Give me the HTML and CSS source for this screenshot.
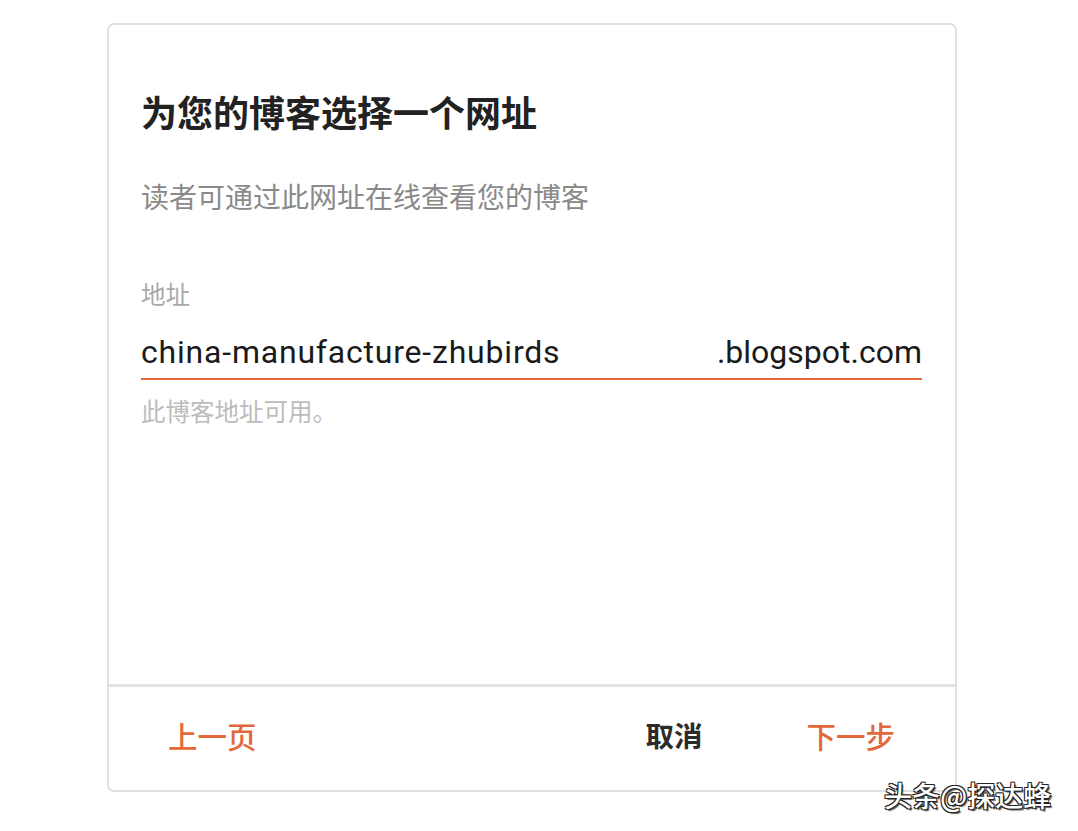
FILE: index.html
```html
<!DOCTYPE html>
<html lang="zh-CN">
<head>
<meta charset="utf-8">
<title>为您的博客选择一个网址</title>
<link rel="stylesheet" href="styles.css">
</head>
<body>
<div class="page">
  <div class="card">
    <div class="card-body">
      <h1 class="title">为您的博客选择一个网址</h1>
      <p class="subtitle">读者可通过此网址在线查看您的博客</p>
      <div class="field">
        <div class="field-label">地址</div>
        <div class="field-input">
          <span class="field-value">china-manufacture-zhubirds</span>
          <span class="field-suffix">.blogspot.com</span>
        </div>
        <div class="field-help">此博客地址可用。</div>
      </div>
    </div>
    <div class="card-footer">
      <span class="btn btn-accent">上一页</span>
      <span class="spacer"></span>
      <span class="btn btn-cancel">取消</span>
      <span class="btn btn-accent btn-next">下一步</span>
    </div>
  </div>
  <div class="watermark">头条@探达蜂</div>
</div>
</body>
</html>
```

FILE: styles.css
```css
html, body {
  margin: 0;
  padding: 0;
  background: #ffffff;
}

body {
  font-family: "Noto Sans CJK SC", "Noto Sans", Roboto, sans-serif;
  color: #212121;
}

.page {
  position: relative;
  width: 1078px;
  height: 831px;
  overflow: hidden;
}

.card {
  margin: 23px 0 0 107px;
  width: 850px;
  height: 769px;
  box-sizing: border-box;
  border: 2px solid #e0e0e0;
  border-radius: 7px;
  display: flex;
  flex-direction: column;
  background: #fff;
}

.card-body {
  flex: 1;
  padding: 62px 33px 0 32px;
}

.title {
  margin: 0;
  font-size: 36px;
  line-height: 48px;
  font-weight: 700;
  color: #222222;
}

.subtitle {
  margin: 41px 0 0;
  font-size: 28px;
  line-height: 40px;
  font-weight: 400;
  color: #8a8a8a;
}

.field {
  margin-top: 62px;
}

.field-label {
  font-size: 24.5px;
  line-height: 32px;
  color: #a9a9a9;
}

.field-input {
  display: flex;
  justify-content: space-between;
  align-items: baseline;
  margin-top: 22px;
  padding-bottom: 6px;
  border-bottom: 2px solid #e2693d;
  font-family: Roboto, "Noto Sans", sans-serif;
  font-size: 32px;
  line-height: 40px;
  color: #1a1a1a;
}

.field-value {
  letter-spacing: 0.8px;
}

.field-help {
  margin-top: 15px;
  font-size: 24.5px;
  line-height: 32px;
  color: #bcbcbc;
}

.card-footer {
  height: 106px;
  border-top: 3px solid #e3e3e3;
  display: flex;
  align-items: center;
  padding: 0 60px 7px 59px;
  box-sizing: border-box;
}

.btn {
  font-size: 29.5px;
  line-height: 40px;
  font-weight: 500;
}

.btn-accent {
  color: #e2683c;
}

.btn-cancel {
  color: #2b2b2b;
  font-weight: 700;
  font-size: 28.5px;
}

.btn-next {
  margin-left: 104px;
}

.spacer {
  flex: 1;
}

.watermark {
  position: absolute;
  left: 884px;
  top: 776px;
  font-size: 28px;
  line-height: 38px;
  font-weight: 500;
  color: #ffffff;
  text-shadow:
    1px 1px 0 #222, -1px -1px 0 #222, 1px -1px 0 #222, -1px 1px 0 #222,
    2px 2px 1px rgba(0,0,0,0.6);
}
```
